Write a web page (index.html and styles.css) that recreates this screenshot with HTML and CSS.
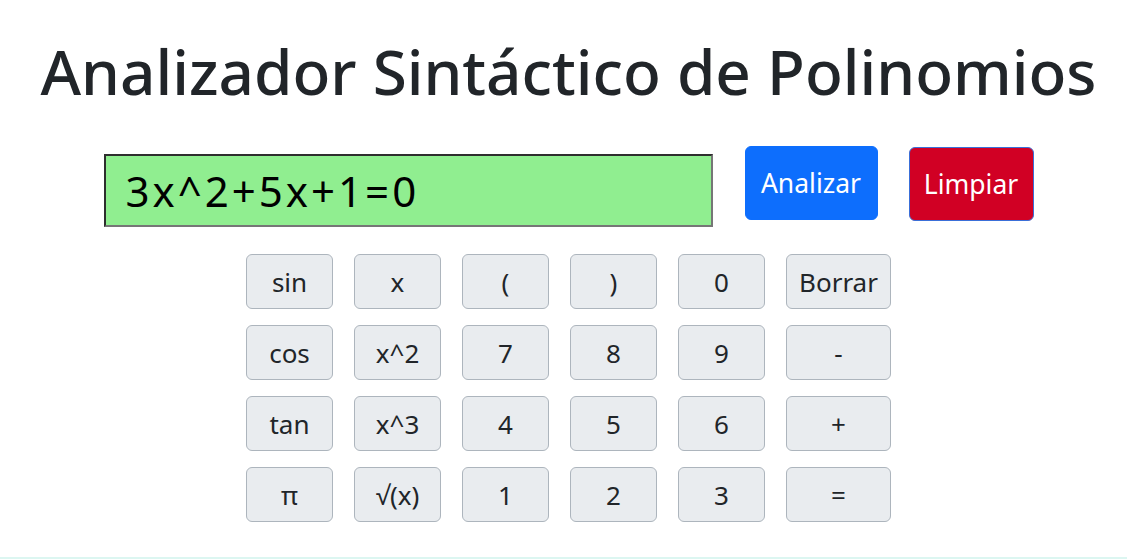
FILE: index.html
```html
<!DOCTYPE html>
<html lang="es">
<head>
<meta charset="utf-8">
<title>Analizador Sintáctico de Polinomios</title>
<link rel="stylesheet" href="styles.css">
</head>
<body>
<main class="app">
  <h1 class="title">Analizador Sintáctico de Polinomios</h1>
  <div class="input-row">
    <input class="expr" type="text" value="3x^2+5x+1=0">
    <button class="btn btn-primary">Analizar</button>
    <button class="btn btn-danger">Limpiar</button>
  </div>
  <div class="keypad">
    <button class="key">sin</button>
    <button class="key">x</button>
    <button class="key">(</button>
    <button class="key">)</button>
    <button class="key">0</button>
    <button class="key key-wide">Borrar</button>
    <button class="key">cos</button>
    <button class="key">x^2</button>
    <button class="key">7</button>
    <button class="key">8</button>
    <button class="key">9</button>
    <button class="key key-wide">-</button>
    <button class="key">tan</button>
    <button class="key">x^3</button>
    <button class="key">4</button>
    <button class="key">5</button>
    <button class="key">6</button>
    <button class="key key-wide">+</button>
    <button class="key">π</button>
    <button class="key">√(x)</button>
    <button class="key">1</button>
    <button class="key">2</button>
    <button class="key">3</button>
    <button class="key key-wide">=</button>
  </div>
  <div class="result"></div>
</main>
</body>
</html>
```

FILE: styles.css
```css
html, body {
  margin: 0;
  padding: 0;
  background: #fff;
}
body {
  font-family: "Noto Sans", "Open Sans", sans-serif;
  color: #212529;
}
.app {
  display: flex;
  flex-direction: column;
  align-items: center;
  padding-left: 10px;
}
.title {
  margin: 34px 0 0;
  font-size: 62px;
  font-weight: 500;
  line-height: 1.2;
  color: #212529;
}
.input-row {
  display: flex;
  align-items: flex-start;
  margin-top: 38px;
}
.expr {
  width: 609px;
  height: 73px;
  box-sizing: border-box;
  margin-top: 8px;
  padding: 0 20px;
  font-family: "Noto Sans", "Open Sans", sans-serif;
  font-size: 42px;
  letter-spacing: 3px;
  color: #000;
  background: #90ee90;
  border: 2px solid;
  border-color: #2e2e2e #767676 #767676 #2e2e2e;
}
.btn {
  font-family: "Noto Sans", "Open Sans", sans-serif;
  font-size: 26.5px;
  color: #fff;
  border-radius: 6px;
  height: 74px;
  padding: 0;
  cursor: pointer;
}
.btn-primary {
  margin-left: 32px;
  width: 133px;
  background: #0d6efd;
  border: 1px solid #0d6efd;
}
.btn-danger {
  margin-left: 31px;
  margin-top: 1px;
  width: 125px;
  background: #d10024;
  border: 1px solid #3a6fd8;
}
.keypad {
  display: grid;
  grid-template-columns: repeat(5, 87px) 105px;
  grid-auto-rows: 55px;
  column-gap: 21px;
  row-gap: 16px;
  margin-top: 27px;
}
.key {
  font-family: "Noto Sans", "Open Sans", sans-serif;
  font-size: 26px;
  color: #212529;
  background: #e9ecef;
  border: 1px solid #adb5bd;
  border-radius: 6px;
  padding: 0;
  cursor: pointer;
}
.result {
  align-self: stretch;
  margin-top: 35px;
  margin-left: -10px;
  height: 0;
  border-top: 2px solid #dcf6f1;
}
```
